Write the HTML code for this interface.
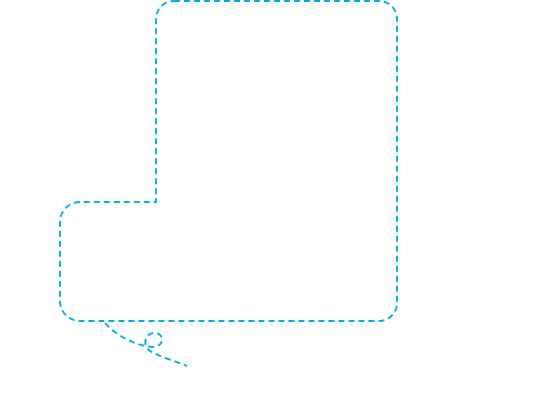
<!DOCTYPE html><html><head><style>html,body{margin:0;padding:0;background:#fff;}svg{display:block}</style></head><body>
<svg width="560" height="413" viewBox="0 0 560 413" xmlns="http://www.w3.org/2000/svg">
<g fill="none" stroke="#00aeef" stroke-width="1.9" stroke-dasharray="6,4">
<path d="M174,1 H379 A18,18 0 0 1 397,19 V303 A18,18 0 0 1 379,321 H80 A20,20 0 0 1 60,301 V222 A20,20 0 0 1 80,202 H156 V19 A18,18 0 0 1 174,1 Z"/>
<path d="M105,323 C118,337 135,345 152,347 C165,347 165,333 154,333 C145,333 142,345 150,351 C160,357 175,361 187,366"/>
</g>
</svg>
</body></html>
